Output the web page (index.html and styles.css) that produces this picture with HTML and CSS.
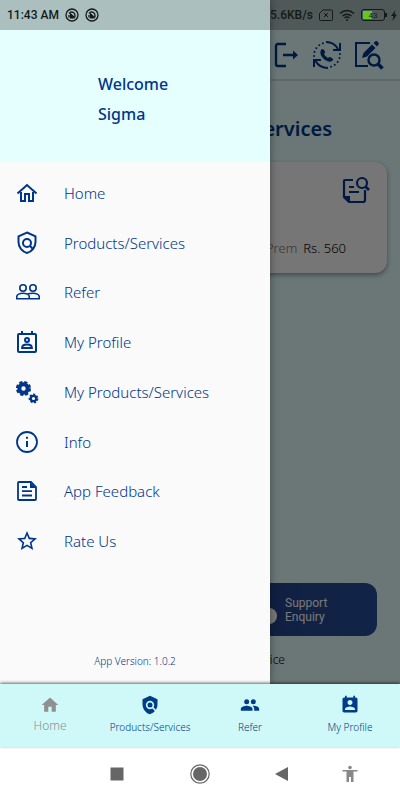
FILE: index.html
```html
<!DOCTYPE html>
<html lang="en">
<head>
<meta charset="utf-8">
<meta name="viewport" content="width=device-width, initial-scale=1">
<title>My Products/Services</title>
<link rel="stylesheet" href="styles.css">
</head>
<body>
<div class="stage">
  <main class="page">
    <header class="toolbar">
      <button class="icon-button" aria-label="Log out"><svg width="26" height="26" viewBox="0 0 26 26" fill="none" stroke="currentColor" stroke-width="2.4"><path d="M12 2H4q-2 0-2 2v18q0 2 2 2h8M9 13h12"/><path d="M19 8.500l5 4.500-5 4.500z" fill="currentColor" stroke="none"/></svg></button>
      <button class="icon-button" aria-label="Call back"><svg width="30" height="30" viewBox="0 0 30 30" fill="none" stroke="currentColor" stroke-width="2"><path d="M14 2c6 0 9.500 2.500 12 7M28 3v7h-7M16 28c-6 0-10-2.500-12.500-7M2 27v-7h7"/><path d="M28 14a13 13 0 0 1-10 13M2 16A13 13 0 0 1 12 3" stroke-linecap="round" stroke-dasharray="0.1 4"/><path d="M9 10q1.500-2 3 0l1 1.500q.5 1-1 2.500 1 2.500 4 4 1.500-1.500 2.500-.8l2 1.300q1.500 1-.5 2.500-2 1.300-5 0-5-2.500-6.500-7-.5-2.500.5-4z" fill="currentColor" stroke="none"/></svg></button>
      <button class="icon-button" aria-label="Edit and search"><svg width="30" height="30" viewBox="0 0 30 30" fill="none" stroke="currentColor" stroke-width="2"><path d="M16 3H2v23h12"/><path d="M8 18l1.500-5L18 4.500l3.500 3.500-8.500 8.500zM19.500 3l2-1.700q1-.6 2 .3l.8.8q1 1 .2 2l-1.500 2z" fill="currentColor" stroke="none"/><circle cx="20" cy="20" r="5.500" stroke-width="2.400"/><path d="M24 24l4.500 4.500" stroke-width="3.500"/></svg></button>
    </header>
    <h1 class="page-title">Services</h1>
    <section class="card">
      <button class="icon-button card-action" aria-label="View details"><svg width="28" height="28" viewBox="0 0 28 28" fill="none" stroke="currentColor" stroke-width="2.200"><path d="M11 4H3q-1 0-1 1v16l5 5h14q2 0 2-2V14M7 11h5M7 16h10"/><path d="M2 20h6v6z" fill="currentColor" stroke="none"/><circle cx="20" cy="7" r="5"/><path d="M23.500 10.500L27 14" stroke-width="2.600"/></svg></button>
      <p class="premium"><span class="premium-label">Prem</span><span>Rs. 560</span></p>
    </section>
    <button class="support"><span class="support-dot"></span><span class="support-text">Support Enquiry</span></button>
    <p class="caption">Service</p>
  </main>
  <div class="scrim"></div>
  <aside class="drawer">
    <div class="welcome"><p>Welcome</p><p>Sigma</p></div>
    <nav class="menu" aria-label="Main menu">
      <a href="#home"><svg width="24" height="24" viewBox="0 0 24 24" fill="none" stroke="currentColor" stroke-width="2"><path d="M2.500 12.500L12 4l9.500 8.500"/><path d="M6 11v9h4v-7h4v7h4v-9"/></svg>Home</a>
      <a href="#products"><svg width="24" height="24" viewBox="0 0 24 24" fill="none" stroke="currentColor" stroke-width="2"><path d="M12 1.500l8.500 3.800v5.700c0 5-3.500 9.700-8.500 11-5-1.300-8.500-6-8.500-11V5.300z"/><circle cx="12" cy="12" r="4"/><path d="M14.800 14.800l3.400 3.400"/></svg>Products/Services</a>
      <a href="#refer"><svg width="26" height="24" viewBox="0 0 26 24" fill="none" stroke="currentColor" stroke-width="1.600"><circle cx="8" cy="8" r="3.200"/><circle cx="18" cy="8" r="3.200"/><path d="M1.800 18.700v-2.500c0-1.500 3-3 6.200-3s6.200 1.500 6.200 3v2.500zM12.500 14c1.500-.5 3.500-.8 5.500-.8 3.200 0 6.200 1.500 6.200 3v2.500h-10"/></svg>Refer</a>
      <a href="#profile"><svg width="24" height="24" viewBox="0 0 24 24" fill="none" stroke="currentColor" stroke-width="2"><rect x="3" y="4" width="18" height="18" rx="1"/><path d="M7 1v3M17 1v3" /><circle cx="12" cy="10" r="2"/><path d="M7 18c0-2 2-3.500 5-3.500s5 1.500 5 3.500z" stroke-width="1.800"/></svg>My Profile</a>
      <a href="#my-products"><svg width="24" height="24" viewBox="0 0 24 24" fill="none" stroke="currentColor"><circle cx="8.500" cy="8.500" r="4.200" stroke-width="4"/><circle cx="8.500" cy="8.500" r="6.500" stroke-width="2.200" stroke-dasharray="3.200 1.905"/><circle cx="18.500" cy="18.500" r="2.700" stroke-width="2.200"/><circle cx="18.500" cy="18.500" r="4" stroke-width="1.800" stroke-dasharray="2.100 1.490"/></svg>My Products/Services</a>
      <a href="#info"><svg width="24" height="24" viewBox="0 0 24 24" fill="none" stroke="currentColor"><circle cx="12" cy="12" r="10" stroke-width="1.800"/><path d="M12 6.800v2M12 11v6" stroke-width="2"/></svg>Info</a>
      <a href="#feedback"><svg width="24" height="24" viewBox="0 0 24 24" fill="none" stroke="currentColor" stroke-width="1.800"><path d="M3 4q0-1 1-1h12l5 5v12q0 1-1 1H4q-1 0-1-1zM7 8h5M7 12.200h10M7 16.500h10"/><path d="M15 3v6h6z" fill="currentColor" stroke="none"/></svg>App Feedback</a>
      <a href="#rate"><svg width="24" height="24" viewBox="0 0 24 24" fill="currentColor"><path d="M22 9.240l-7.190-.62L12 2 9.190 8.630 2 9.240l5.460 4.730L5.820 21 12 17.270 18.180 21l-1.630-7.030L22 9.240zM12 15.400l-3.760 2.270 1-4.280-3.320-2.880 4.380-.38L12 6.100l1.710 4.040 4.380.38-3.320 2.880 1 4.280L12 15.400z"/></svg>Rate Us</a>
    </nav>
    <p class="version">App Version: 1.0.2</p>
  </aside>
  <div class="status">
    <span class="status-group"><span>11:43 AM</span>
      <svg width="14" height="14" viewBox="0 0 14 14" fill="none" stroke="currentColor" stroke-width="1.300"><circle cx="7" cy="7" r="6"/><path d="M4 9.500V7M5 4.200q4.500-1 5 3.300v1.500"/><path d="M4 4.500l6 5.500M5.500 7.500l2.500 2.500H5.500z" stroke-width="1.200"/></svg>
      <svg width="14" height="14" viewBox="0 0 14 14" fill="none" stroke="currentColor" stroke-width="1.300"><circle cx="7" cy="7" r="6"/><path d="M4 9.500V7M5 4.200q4.500-1 5 3.300v1.500"/><path d="M4 4.500l6 5.500M5.500 7.500l2.500 2.500H5.500z" stroke-width="1.200"/></svg></span>
    <span class="status-group"><span>5.6KB/s</span>
      <svg width="14" height="12" viewBox="0 0 14 12" fill="none" stroke="currentColor"><path d="M4 1h8.500q1 0 1 1v8.500q0 1-1 1h-11q-1 0-1-1v-6zM5 4l4 4M9 4L5 8"/></svg>
      <svg width="16" height="12" viewBox="0 0 16 12" fill="none" stroke="currentColor" stroke-width="1.500"><path d="M1 4.500q7-6 14 0M3.500 7q4.500-3.500 9 0M5.500 9q2.500-2 5 0"/><circle cx="8" cy="11" r="1" fill="currentColor" stroke="none"/></svg>
      <span class="battery"><span class="battery-level"></span><span class="battery-text">43</span></span>
      <svg class="bolt" width="6" height="11" viewBox="0 0 6 11" fill="currentColor"><path d="M4.500 0L0 6h2.500L1.500 11 6 4.500H3.500z"/></svg></span>
  </div>
</div>
<nav class="tabs" aria-label="Sections">
  <a class="tab tab-current" href="#home"><svg width="20" height="20" viewBox="0 0 24 24" fill="currentColor"><path d="M10 20v-6h4v6h5v-8h3L12 3 2 12h3v8z"/></svg>Home</a>
  <a class="tab" href="#products"><svg width="20" height="20" viewBox="0 0 24 24" fill="currentColor"><path d="M21 5l-9-4-9 4v6c0 5.550 3.840 10.740 9 12 2.300-.56 4.330-1.900 5.880-3.710l-3.120-3.120c-1.940 1.290-4.580 1.070-6.290-.64-1.950-1.950-1.950-5.120 0-7.070 1.950-1.950 5.120-1.950 7.070 0 1.710 1.710 1.920 4.350.64 6.290l2.900 2.900C20.290 15.690 21 13.380 21 11V5z"/><circle cx="12" cy="12" r="3"/></svg>Products/Services</a>
  <a class="tab" href="#refer"><svg width="20" height="20" viewBox="0 0 24 24" fill="currentColor"><circle cx="8" cy="8" r="3"/><circle cx="16" cy="8" r="3"/><path d="M8 13c-2.330 0-7 1.170-7 3.500V19h14v-2.500c0-2.330-4.670-3.500-7-3.500zm8 0c-.29 0-.62.02-.97.05 1.160.84 1.970 1.970 1.970 3.450V19h6v-2.500c0-2.330-4.670-3.500-7-3.500z"/></svg>Refer</a>
  <a class="tab" href="#profile"><svg width="20" height="20" viewBox="0 0 24 24" fill="currentColor"><path d="M19 3h-1V1h-2v2H8V1H6v2H5c-1.110 0-2 .9-2 2v14c0 1.100.89 2 2 2h14c1.100 0 2-.9 2-2V5c0-1.100-.9-2-2-2zm-7 3c1.660 0 3 1.340 3 3s-1.340 3-3 3-3-1.340-3-3 1.340-3 3-3zm6 12H6v-1c0-2 4-3.100 6-3.100s6 1.100 6 3.100v1z"/></svg>My Profile</a>
</nav>
<div class="system">
  <button class="system-button" aria-label="Recent apps"><svg width="14" height="14" viewBox="0 0 14 14" fill="currentColor"><path d="M.5.5h13v13H.5z"/></svg></button>
  <button class="system-button" aria-label="Home screen"><svg width="20" height="20" viewBox="0 0 20 20" fill="none" stroke="currentColor"><circle cx="10" cy="10" r="9.200" stroke-width="1.200"/><circle cx="10" cy="10" r="7" fill="currentColor" stroke="none"/></svg></button>
  <button class="system-button" aria-label="Back"><svg width="16" height="16" viewBox="0 0 16 16" fill="currentColor"><path d="M13 1v14L0 8z"/></svg></button>
  <button class="system-button system-light" aria-label="Accessibility"><svg width="16" height="18" viewBox="0 0 16 18" fill="currentColor"><circle cx="8" cy="2.500" r="1.800"/><path d="M.5 5h15v1.500h-4V17H9v-5H7v5H4.500V6.500h-4z"/></svg></button>
</div>
</body>
</html>
```
FILE: styles.css
```css
* {
  box-sizing: border-box;
}

body {
  margin: 0;
  min-height: 100vh;
  display: flex;
  flex-direction: column;
  font-family: "Noto Sans", "Open Sans", sans-serif;
  font-weight: 300;
  color: #00368a;
  background: #fff;
}

p,
h1 {
  margin: 0;
}

a {
  color: inherit;
  text-decoration: none;
}

button {
  border: 0;
  padding: 0;
  background: none;
  color: inherit;
  font: inherit;
}

svg {
  display: block;
  flex: none;
}

.stage {
  position: relative;
  flex: 1;
  display: flex;
  overflow: hidden;
}

.page {
  flex: 1;
  display: flex;
  flex-direction: column;
  padding-top: 31px;
  background: #e1fdfb;
}

.toolbar {
  display: flex;
  justify-content: flex-end;
  align-items: center;
  gap: 12px;
  height: 50px;
  padding-right: 16px;
  border-bottom: 2px solid #cddedd;
}

.page-title {
  margin: 34px 68px 0 0;
  font-size: 20px;
  line-height: 28px;
  font-weight: 600;
  text-align: right;
}

.card {
  display: flex;
  flex-direction: column;
  justify-content: space-between;
  align-items: flex-end;
  height: 111px;
  margin: 19px 13px 0;
  padding: 14px 17px;
  border-radius: 12px;
  background: #fafafa;
  box-shadow: 0 2px 5px rgba(0, 0, 0, 0.4);
}

.premium {
  display: flex;
  gap: 6px;
  margin-right: 24px;
  font-size: 13px;
  line-height: 22px;
  color: #000;
}

.premium-label {
  color: #777;
}

.support {
  display: flex;
  align-items: center;
  gap: 8px;
  align-self: flex-end;
  width: 160px;
  height: 53px;
  margin: auto 23px 0 0;
  padding-left: 44px;
  border-radius: 12px;
  background: linear-gradient(90deg, #233f85, #264f99);
  color: #fff;
  font-family: Roboto, sans-serif;
  font-size: 12px;
  line-height: 14px;
  font-weight: 400;
  text-align: left;
}

.support-dot {
  flex: none;
  width: 16px;
  height: 16px;
  margin-top: 12px;
  border-radius: 50%;
  background: #fff;
}

.support-text {
  width: 50px;
}

.caption {
  margin: 14px 115px 14px 0;
  font-size: 12px;
  line-height: 20px;
  color: #000;
  text-align: right;
}

.scrim {
  position: absolute;
  inset: 0;
  background: rgba(0, 0, 0, 0.53);
}

.drawer {
  position: absolute;
  inset: 0 auto 0 0;
  width: 270px;
  display: flex;
  flex-direction: column;
  background: #fafafa;
  box-shadow: 0 0 8px rgba(0, 0, 0, 0.4);
}

.welcome {
  height: 162px;
  padding: 69px 0 0 98px;
  background: #e5ffff;
  font-size: 16px;
  line-height: 30px;
  font-weight: 500;
}

.menu {
  display: flex;
  flex-direction: column;
  height: 404px;
  padding-top: 6px;
}

.menu a {
  flex: 1;
  display: grid;
  grid-template-columns: 24px 1fr;
  align-items: center;
  justify-items: start;
  gap: 25px;
  padding-left: 15px;
  font-size: 15px;
  line-height: 20px;
}

.version {
  margin: auto 0 13px;
  font-size: 10px;
  line-height: 20px;
  text-align: center;
}

.status {
  position: absolute;
  inset: 0 0 auto;
  display: flex;
  justify-content: space-between;
  align-items: center;
  height: 30px;
  padding: 0 3px 0 7px;
  background: rgba(0, 0, 0, 0.25);
  color: #151919;
  font-family: Roboto, sans-serif;
  font-size: 12px;
  font-weight: 500;
}

.status-group {
  display: flex;
  align-items: center;
  gap: 6px;
}

.battery {
  position: relative;
  display: flex;
  align-items: center;
  justify-content: center;
  width: 24px;
  height: 12px;
  border: 1px solid #151919;
  border-radius: 3px;
  font-size: 8px;
  font-weight: 400;
}

.battery::after {
  content: "";
  position: absolute;
  right: -3px;
  width: 2px;
  height: 4px;
  background: #151919;
}

.battery-level {
  position: absolute;
  inset: 1px auto 1px 1px;
  width: 9px;
  background: #5fc824;
}

.battery-text {
  position: relative;
}

.tabs {
  position: relative;
  display: grid;
  grid-template-columns: repeat(4, 1fr);
  height: 63px;
  background: #cff9f8;
  box-shadow: 0 -1px 3px rgba(0, 0, 0, 0.6);
}

.tab {
  display: flex;
  flex-direction: column;
  align-items: center;
  gap: 4px;
  padding-top: 11px;
  font-size: 10px;
  line-height: 16px;
  color: #003c87;
}

.tab-current {
  gap: 3px;
  font-size: 12px;
  color: #909090;
}

.system {
  display: grid;
  grid-template-columns: 83fr 83fr 83fr 50fr;
  align-items: center;
  height: 53px;
  padding: 0 25px 0 75px;
}

.system-button {
  display: flex;
  justify-content: center;
  color: #666;
}

.system-light {
  color: #888;
}
```
